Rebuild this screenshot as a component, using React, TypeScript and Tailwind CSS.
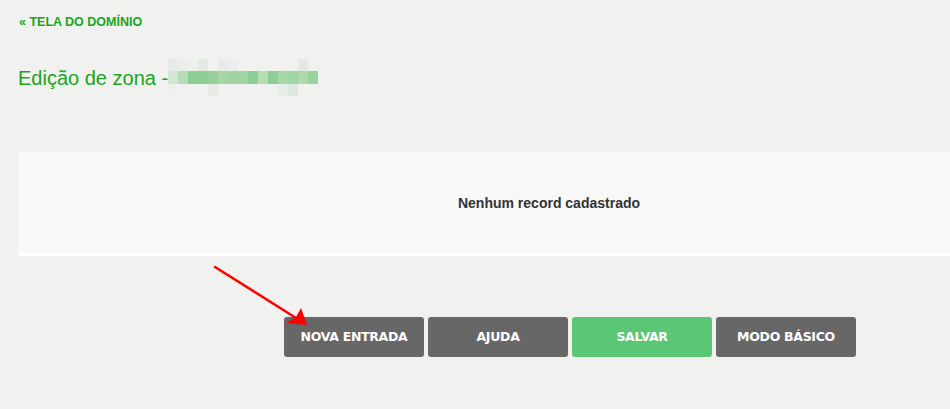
import React from 'react';

const MAIN = ['#d3e6d3', '#b6dcb8', '#8ccf96', '#8ccf96', '#95d09c', '#a8d6a3', '#9ed4a4', '#a2d5a6', '#8ecf98', '#b8dcb3', '#8ccf96', '#a6d7a8', '#a0d5a5', '#b0d9ab', '#98d29e'];
const TOP = ['#e6ebe5', '#eaedec', '#ecefea', '#e3eae2', '#f1f1f0', '#e8ece6', '#ebeeed', '#f1f1f0', '#f1f1f0', '#f1f1f0', '#f1f1f0', '#f1f1f0', '#f1f1f0', '#e3eae2', '#f1f1f0'];
const BOTTOM = ['#eff0ee', '#f1f1f0', '#f1f1f0', '#f1f1f0', '#e6ebe5', '#f1f1f0', '#f1f1f0', '#f1f1f0', '#f1f1f0', '#f1f1f0', '#f1f1f0', '#e8ede6', '#dde9dd', '#f1f1f0', '#f1f1f0'];

function Mosaic() {
  const row = (colors: string[], h: string) => (
    <div className={`flex ${h}`}>
      {colors.map((c, i) => (
        <span key={i} className="w-[10px] h-full" style={{ backgroundColor: c }} />
      ))}
    </div>
  );
  return (
    <span className="inline-flex flex-col w-[152px] overflow-hidden align-middle">
      {row(TOP, 'h-[12px]')}
      {row(MAIN, 'h-[13px]')}
      {row(BOTTOM, 'h-[12px]')}
    </span>
  );
}

const buttons = [
  { label: 'NOVA ENTRADA', bg: 'bg-[#676767]' },
  { label: 'AJUDA', bg: 'bg-[#676767]' },
  { label: 'SALVAR', bg: 'bg-[#5bc673]' },
  { label: 'MODO BÁSICO', bg: 'bg-[#676767]' },
];

export default function App() {
  return (
    <div className="relative w-[950px] h-[409px] overflow-hidden bg-[#f1f1f0] font-['Liberation_Sans',Arial,sans-serif]">
      <div className="pl-[19px] pt-[9px]">
        <a className="text-[12.5px] font-bold text-[#1aa51a]">« TELA DO DOMÍNIO</a>
      </div>
      <h1 className="flex items-center mt-[26px] pl-[18px] text-[20px] text-[#1aa51a] leading-none">
        <span>Edição de zona -</span>
        <Mosaic />
      </h1>

      <div className="ml-[18px] mt-[56px] w-[1062px] bg-white pb-[3px]">
        <div className="h-[101px] bg-[#f8f8f8] flex items-center justify-center">
          <span className="text-[14px] font-bold text-[#333] pt-[2px]">Nenhum record cadastrado</span>
        </div>
      </div>

      <div className="flex gap-[4px] ml-[284px] mt-[61px]">
        {buttons.map((b) => (
          <button
            key={b.label}
            type="button"
            className={`w-[140px] h-[40px] rounded-[3px] ${b.bg} text-white text-[12.5px] font-bold font-['DejaVu_Sans',sans-serif] tracking-[-0.3px]`}
          >
            {b.label}
          </button>
        ))}
      </div>

      <svg className="absolute left-0 top-0 pointer-events-none" width="950" height="409">
        <line x1="215" y1="267" x2="296" y2="318" stroke="#f00" strokeWidth="2.5" strokeLinecap="round" />
        <polygon points="307,325 286,323 296,317 301,308" fill="#f00" />
      </svg>
    </div>
  );
}
